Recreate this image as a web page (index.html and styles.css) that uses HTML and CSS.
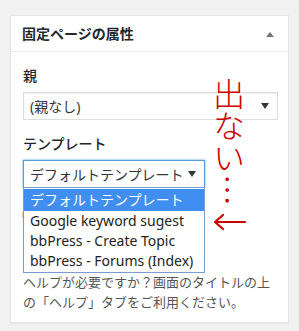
FILE: index.html
```
<!DOCTYPE html>
<html lang="ja">
<head>
<meta charset="UTF-8">
<title>固定ページの属性</title>
<link rel="stylesheet" href="styles.css">
</head>
<body>

<div class="postbox">
  <div class="postbox-header">
    <h2>固定ページの属性</h2>
    <span class="toggle"></span>
  </div>
  <div class="inside">
    <p class="field-label">親</p>
    <div class="select select-parent">
      <span>(親なし)</span>
      <span class="arrow"></span>
    </div>

    <p class="field-label">テンプレート</p>
    <div class="select-wrap">
      <div class="select select-template">
        <span>デフォルトテンプレート</span>
        <span class="arrow"></span>
      </div>
      <ul class="dropdown">
        <li class="selected">デフォルトテンプレート</li>
        <li>Google keyword sugest</li>
        <li>bbPress - Create Topic</li>
        <li>bbPress - Forums (Index)</li>
      </ul>
    </div>

    <!-- 順序の欄はドロップダウンの下に隠れている -->
    <div class="order-field">
      <span class="order-mark"></span>
      <div class="order-input"></div>
    </div>

    <p class="howto">ヘルプが必要ですか？画面のタイトルの上の「ヘルプ」タブをご利用ください。</p>
  </div>

  <!-- 手書きのメモ -->
  <div class="note">出ない…</div>
  <svg class="note-arrow" width="34" height="18" viewBox="0 0 34 18">
    <path d="M2 9 H32 M10 2 L2 9 L10 16" fill="none" stroke="#cc0000" stroke-width="2.2" stroke-linecap="round" stroke-linejoin="round"/>
  </svg>
</div>

</body>
</html>
```

FILE: styles.css
```
* {
  box-sizing: border-box;
  margin: 0;
  padding: 0;
}

body {
  font-family: "Noto Sans", "Noto Sans CJK JP", sans-serif;
  background-color: #f1f1f1;
  color: #23282d;
  padding: 15px 10px;
}

.postbox {
  position: relative;
  width: 279px;
  background-color: #fff;
  border: 1px solid #e5e5e5;
  box-shadow: 0 1px 1px rgba(0, 0, 0, 0.04);
}

.postbox-header {
  display: flex;
  justify-content: space-between;
  align-items: center;
  height: 36px;
  padding: 0 14px 0 11px;
  border-bottom: 1px solid #eee;
}

.postbox-header h2 {
  font-size: 14px;
  font-weight: 700;
  line-height: 20px;
}

.toggle {
  width: 0;
  height: 0;
  border-left: 4px solid transparent;
  border-right: 4px solid transparent;
  border-bottom: 5px solid #72777c;
  margin-top: 1px;
}

.inside {
  padding: 14px 12px 10px;
  font-size: 13px;
}

.field-label {
  font-size: 14px;
  font-weight: 500;
  line-height: 20px;
  margin-bottom: 6px;
}

.select {
  display: flex;
  justify-content: space-between;
  align-items: center;
  height: 28px;
  padding: 0 8px 0 6px;
  background-color: #fff;
  border: 1px solid #ddd;
  box-shadow: inset 0 1px 2px rgba(0, 0, 0, 0.07);
  font-size: 14px;
  color: #32373c;
  margin-bottom: 14px;
}

.select-parent {
  width: 255px;
}

.arrow {
  width: 0;
  height: 0;
  border-left: 4px solid transparent;
  border-right: 4px solid transparent;
  border-top: 6px solid #32373c;
}

.select-wrap {
  position: relative;
  width: 182px;
}

.select-template {
  border-color: #5b9dd9;
  box-shadow: 0 0 2px rgba(30, 140, 190, 0.8);
}

.dropdown {
  position: absolute;
  top: 27px;
  left: 0;
  width: 182px;
  list-style: none;
  background-color: #fff;
  border: 1px solid #7a9cd3;
  padding: 1px 0;
  font-size: 14px;
  color: #222;
  z-index: 2;
}

.dropdown li {
  height: 20px;
  line-height: 20px;
  padding: 0 6px;
  white-space: nowrap;
}

.dropdown li.selected {
  height: 22px;
  line-height: 22px;
  background-color: #3f8ef0;
  color: #fff;
}

.order-field {
  display: flex;
  flex-direction: column;
  gap: 6px;
  margin-bottom: 16px;
}

.order-mark {
  display: block;
  width: 1px;
  height: 6px;
  margin: 10px 0 4px -1px;
  background-color: #f2c48c;
}

.order-input {
  width: 54px;
  height: 28px;
  border: 1px solid #ddd;
}

.howto {
  font-size: 13px;
  line-height: 20px;
  color: #555;
}

.note {
  position: absolute;
  left: 202px;
  top: 62px;
  writing-mode: vertical-rl;
  font-family: "Noto Sans CJK JP", sans-serif;
  font-weight: 300;
  font-size: 32px;
  line-height: 32px;
  color: #cc0000;
  z-index: 3;
}

.note-arrow {
  position: absolute;
  left: 202px;
  top: 197px;
  z-index: 3;
}
```
